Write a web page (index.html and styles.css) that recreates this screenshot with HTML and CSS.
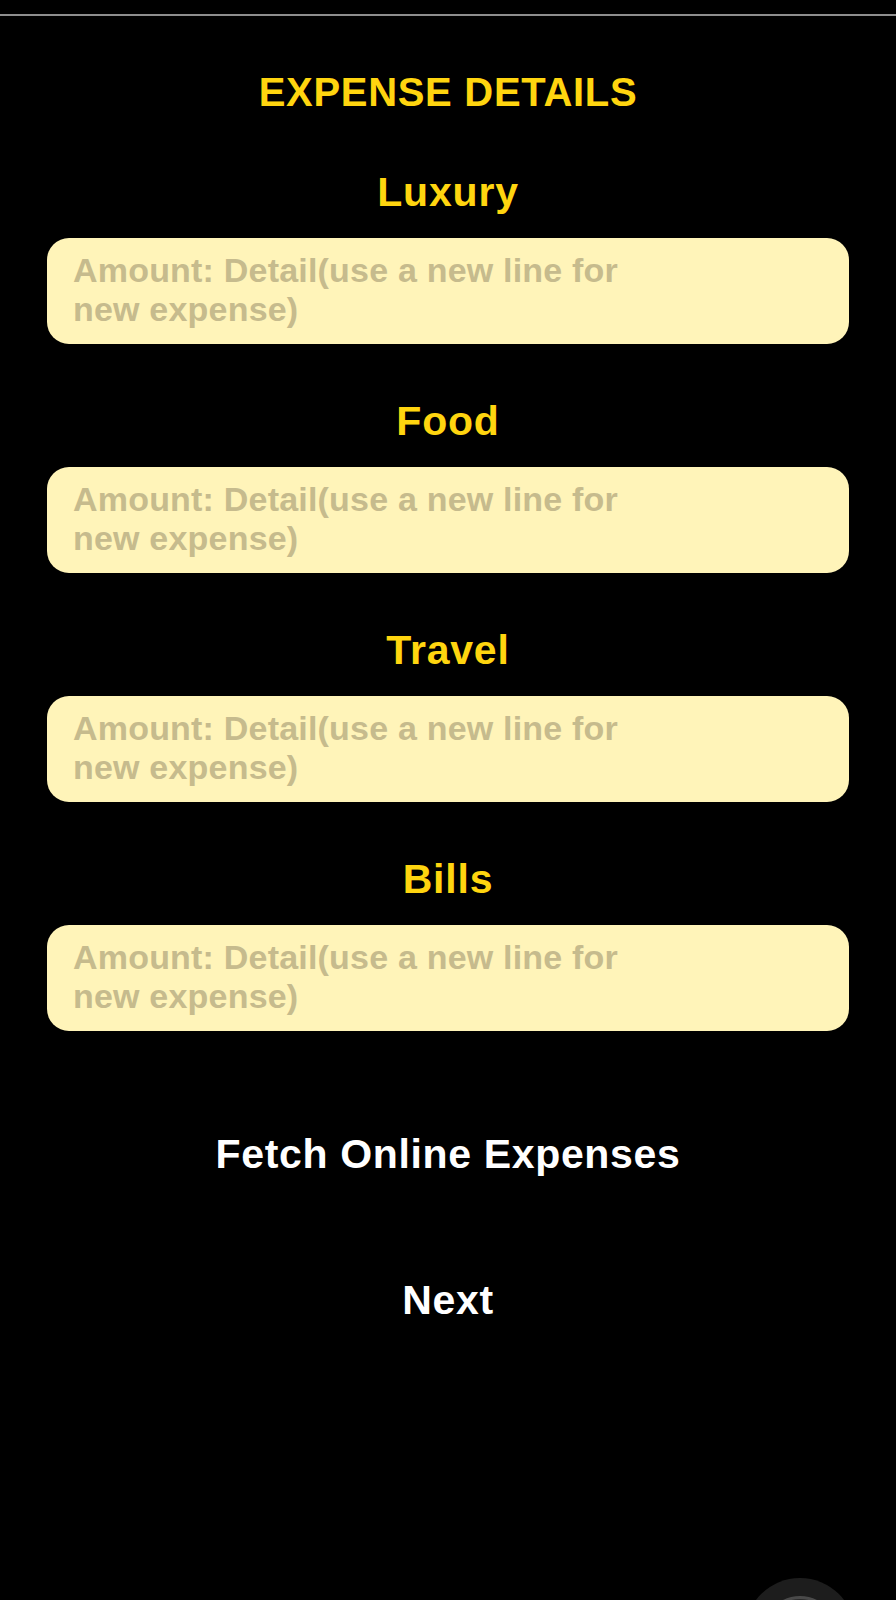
FILE: index.html
```html
<!DOCTYPE html>
<html lang="en">
<head>
<meta charset="utf-8">
<title>Expense Details</title>
<link rel="stylesheet" href="styles.css">
</head>
<body>
<div class="screen">
  <div class="topline"></div>
  <h1 class="title">EXPENSE DETAILS</h1>
  <div class="fields">
    <div class="group">
      <div class="label">Luxury</div>
      <div class="field"><span class="placeholder">Amount: Detail(use a new line for<br>new expense)</span></div>
    </div>
    <div class="group">
      <div class="label">Food</div>
      <div class="field"><span class="placeholder">Amount: Detail(use a new line for<br>new expense)</span></div>
    </div>
    <div class="group">
      <div class="label">Travel</div>
      <div class="field"><span class="placeholder">Amount: Detail(use a new line for<br>new expense)</span></div>
    </div>
    <div class="group">
      <div class="label">Bills</div>
      <div class="field"><span class="placeholder">Amount: Detail(use a new line for<br>new expense)</span></div>
    </div>
  </div>
  <div class="actions">
    <div class="action">Fetch Online Expenses</div>
    <div class="action">Next</div>
  </div>
  <div class="assist"></div>
</div>
</body>
</html>
```

FILE: styles.css
```css
html, body {
  margin: 0;
  padding: 0;
  background: #000;
}

body {
  font-family: "Liberation Sans", Arial, sans-serif;
  font-weight: 700;
}

.screen {
  position: relative;
  width: 896px;
  height: 1600px;
  overflow: hidden;
  background: #000;
}

.topline {
  margin-top: 14px;
  height: 2px;
  background: #8e8e8e;
}

.title {
  margin: 53px 0 0;
  text-align: center;
  font-size: 40px;
  line-height: 46px;
  letter-spacing: 0.7px;
  font-weight: 700;
  color: #ffd50f;
}

.fields {
  margin: 54px 47px 0;
  display: flex;
  flex-direction: column;
  gap: 54px;
}

.group {
  display: flex;
  flex-direction: column;
  gap: 23px;
}

.label {
  text-align: center;
  font-size: 41px;
  line-height: 46px;
  letter-spacing: 0.8px;
  color: #ffd50f;
}

.field {
  box-sizing: border-box;
  height: 106px;
  padding: 13px 26px 0;
  background: #fff4b9;
  border-radius: 22px;
}

.placeholder {
  display: block;
  font-size: 34px;
  line-height: 39px;
  letter-spacing: 0.2px;
  color: #c6bb8d;
}

.actions {
  margin-top: 100px;
  display: flex;
  flex-direction: column;
  align-items: center;
  gap: 100px;
}

.action {
  font-size: 41px;
  line-height: 46px;
  letter-spacing: 0.65px;
  color: #ffffff;
}

.assist {
  position: absolute;
  left: 745px;
  top: 1578px;
  width: 110px;
  height: 110px;
  border-radius: 50%;
  background: #1d1d1d;
}

.assist::after {
  content: "";
  position: absolute;
  left: 18px;
  top: 18px;
  right: 18px;
  bottom: 18px;
  border-radius: 50%;
  border: 3px solid #4a4a4a;
  background: #2a2a2a;
}
```
